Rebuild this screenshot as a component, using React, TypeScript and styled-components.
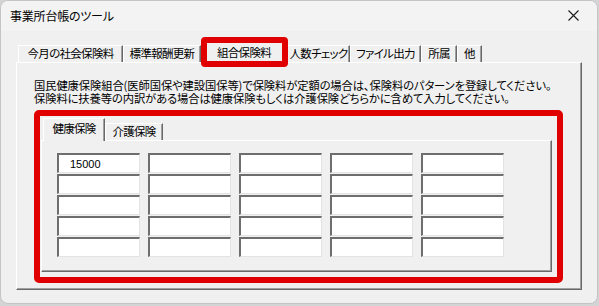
import React from 'react';
import styled, { createGlobalStyle } from 'styled-components';

const GlobalStyle = createGlobalStyle`
  html, body {
    margin: 0;
    padding: 0;
    background: #d2d4d6;
  }
  body {
    font-family: 'Noto Sans CJK JP', 'Noto Sans', sans-serif;
    font-feature-settings: 'palt';
    color: #000;
  }
`;

const outerTabs = [
  { label: '今月の社会保険料', w: 105 },
  { label: '標準報酬更新', w: 78 },
  { label: '組合保険料', w: 86, active: true },
  { label: '人数チェック', w: 63 },
  { label: 'ファイル出力', w: 71 },
  { label: '所属', w: 36 },
  { label: '他', w: 25 },
];

const innerTabs = [
  { label: '健康保険', w: 62, active: true },
  { label: '介護保険', w: 58 },
];

const noteLines = [
  '国民健康保険組合(医師国保や建設国保等)で保険料が定額の場合は、保険料のパターンを登録してください。',
  '保険料に扶養等の内訳がある場合は健康保険もしくは介護保険どちらかに含めて入力してください。',
];

// 5 x 5 の入力欄。最初の欄だけ値がある
const cells = Array.from({ length: 25 }, (_, i) => (i === 0 ? '15000' : ''));

export default function App() {
  return (
    <>
      <GlobalStyle />
      <Window>
        <TitleBar>
          <Title>事業所台帳のツール</Title>
          <CloseButton aria-label="閉じる">
            <svg width="11" height="11" viewBox="0 0 11 11">
              <path d="M0.5 0.5 L10.5 10.5 M10.5 0.5 L0.5 10.5" stroke="#1a1a1a" strokeWidth="1.1" fill="none" />
            </svg>
          </CloseButton>
        </TitleBar>
        <Body>
          <TabStrip $height={20} $inset={2}>
            {outerTabs.map((t) => (
              <Tab key={t.label} $w={t.w} $active={!!t.active} $marked={!!t.active} $h={17} $activeH={21}>
                {t.label}
              </Tab>
            ))}
          </TabStrip>
          <Panel>
            <Note>
              {noteLines.map((line) => (
                <NoteLine key={line}>{line}</NoteLine>
              ))}
            </Note>
            <Highlight>
              <TabStrip $height={22} $inset={2}>
                {innerTabs.map((t) => (
                  <Tab key={t.label} $w={t.w} $active={!!t.active} $marked={false} $h={17} $activeH={23}>
                    {t.label}
                  </Tab>
                ))}
              </TabStrip>
              <InnerPanel>
                <Grid>
                  {cells.map((v, i) => (
                    <Cell key={i} readOnly value={v} />
                  ))}
                </Grid>
              </InnerPanel>
            </Highlight>
          </Panel>
        </Body>
      </Window>
    </>
  );
}

const Window = styled.div`
  box-sizing: border-box;
  width: 598px;
  height: 304px;
  background: #f0f0f0;
  border: 1px solid #c4c4c4;
  border-radius: 8px;
  overflow: hidden;
  display: flex;
  flex-direction: column;
`;

const TitleBar = styled.div`
  height: 30px;
  flex: none;
  display: flex;
  align-items: center;
  justify-content: space-between;
  background: #f3f3f3;
  padding-left: 9px;
`;

const Title = styled.div`
  font-size: 12px;
  letter-spacing: -0.2px;
  padding-bottom: 1px;
`;

const CloseButton = styled.div`
  width: 46px;
  height: 30px;
  display: flex;
  align-items: center;
  justify-content: center;
  margin-right: 1px;
  padding-bottom: 1px;
  box-sizing: border-box;
`;

const Body = styled.div`
  padding: 11px 0 0 15px;
`;

const TabStrip = styled.div<{ $height: number; $inset: number }>`
  display: flex;
  align-items: flex-end;
  height: ${(p) => p.$height}px;
  padding-left: ${(p) => p.$inset}px;
  position: relative;
  z-index: 1;
`;

const Tab = styled.div<{ $w: number; $active: boolean; $marked: boolean; $h: number; $activeH: number }>`
  box-sizing: border-box;
  position: relative;
  flex: none;
  width: ${(p) => p.$w}px;
  height: ${(p) => (p.$active ? p.$activeH : p.$h)}px;
  margin-bottom: ${(p) => (p.$active ? -1 : 0)}px;
  display: flex;
  align-items: ${(p) => (p.$active ? 'flex-start' : 'center')};
  padding-top: ${(p) => (p.$active ? 4 : 0)}px;
  justify-content: center;
  font-size: 11.5px;
  letter-spacing: -0.7px;
  line-height: 1;
  white-space: nowrap;
  background: #f0f0f0;
  border-top: 1px solid #ffffff;
  border-left: 1px solid #ffffff;
  border-right: 1px solid #696969;
  box-shadow: inset -1px 0 0 #a0a0a0;
  z-index: ${(p) => (p.$active ? 2 : 1)};

  &::after {
    content: '';
    display: ${(p) => (p.$marked ? 'block' : 'none')};
    position: absolute;
    left: -1px;
    right: -2px;
    top: -6px;
    bottom: -4px;
    border: 6px solid #e00000;
    border-radius: 4px;
  }
`;

const Panel = styled.div`
  box-sizing: border-box;
  width: 566px;
  height: 228px;
  padding: 16px 17px 0 17px;
  border: 1px solid;
  border-color: #ffffff #696969 #696969 #ffffff;
  box-shadow: inset -1px -1px 0 #a0a0a0;
`;

const Note = styled.div`
  display: flex;
  flex-direction: column;
  margin-bottom: 5px;
`;

const NoteLine = styled.div`
  height: 13px;
  font-size: 11.3px;
  line-height: 13px;
  letter-spacing: -0.1px;
  white-space: nowrap;
`;

const Highlight = styled.div`
  box-sizing: border-box;
  width: 529px;
  height: 173px;
  border: 6px solid #e00000;
  border-radius: 5px;
  padding: 2px 5px 5px 1px;
`;

const InnerPanel = styled.div`
  box-sizing: border-box;
  height: 132px;
  padding: 12px 0 0 15px;
  border: 1px solid;
  border-color: #ffffff #696969 #696969 #ffffff;
  box-shadow: inset -1px -1px 0 #a0a0a0;
`;

const Grid = styled.div`
  display: grid;
  grid-template-columns: repeat(5, 83px);
  grid-auto-rows: 20px;
  column-gap: 8px;
  row-gap: 1px;
`;

const Cell = styled.input`
  box-sizing: border-box;
  width: 83px;
  height: 20px;
  margin: 0;
  padding: 0 0 0 11px;
  background: #ffffff;
  border-style: solid;
  border-width: 2px 1px 1px 2px;
  border-color: #6e6e6e #e3e3e3 #e3e3e3 #6e6e6e;
  font-family: 'Liberation Sans', Arial, sans-serif;
  font-size: 11px;
  color: #000;
  outline: none;
`;
